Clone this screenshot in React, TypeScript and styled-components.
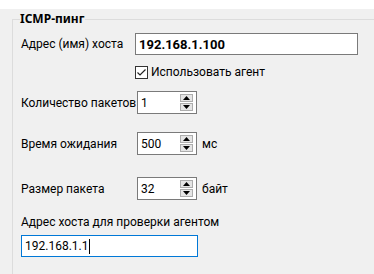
import React from 'react'
import styled, { createGlobalStyle } from 'styled-components'

const GlobalStyle = createGlobalStyle`
  html, body {
    margin: 0;
    padding: 0;
    background: #f0f0f0;
  }
  body {
    font-family: Roboto, "Noto Sans", "DejaVu Sans", sans-serif;
    font-size: 12px;
    color: #000;
  }
`

const TopStrip = styled.div`
  height: 9px;
  background: #fff;
`

const Panel = styled.div`
  background: #f0f0f0;
  height: 265px;
  padding: 2px 0 0 12px;
  box-sizing: border-box;
  overflow: hidden;
`

const Group = styled.fieldset`
  margin: 0;
  padding: 0 0 20px 8px;
  border: 1px solid #dcdcdc;
  border-right: none;
  border-bottom: none;
  min-width: 0;
`

const Legend = styled.legend`
  padding: 0 1px 0 0;
  margin-left: -1px;
  font-family: "Noto Sans", sans-serif;
  font-weight: bold;
  font-size: 12px;
  line-height: 16px;
`

const Row = styled.div<{ $top: number }>`
  display: flex;
  align-items: center;
  margin-top: ${({ $top }) => $top}px;
`

const Label = styled.span<{ $width?: number }>`
  width: ${({ $width }) => ($width ? `${$width}px` : 'auto')};
  flex: none;
  white-space: nowrap;
  line-height: 16px;
`

const TextBox = styled.div<{ $width: number; $bold?: boolean; $focused?: boolean }>`
  box-sizing: border-box;
  width: ${({ $width }) => $width}px;
  height: 22px;
  padding: 0 3px;
  display: flex;
  align-items: center;
  border: 1px solid ${({ $focused }) => ($focused ? '#0078d7' : '#7a7a7a')};
  background: #fff;
  font-size: ${({ $bold }) => ($bold ? '13px' : '12px')};
  font-weight: ${({ $bold }) => ($bold ? 'bold' : 'normal')};
  white-space: nowrap;
`

const Caret = styled.span`
  display: inline-block;
  width: 1px;
  height: 15px;
  margin-left: 1px;
  background: #000;
`

const CheckRow = styled.label`
  display: flex;
  align-items: center;
  gap: 3px;
  margin: 9px 0 0 114px;
  line-height: 16px;
`

const CheckBox = styled.span`
  box-sizing: border-box;
  width: 13px;
  height: 13px;
  border: 1px solid #333;
  background: #fff;
  display: flex;
  align-items: center;
  justify-content: center;
`

const Spin = styled.div`
  box-sizing: border-box;
  width: 60px;
  height: 23px;
  border: 1px solid #7a7a7a;
  background: #fff;
  display: flex;
  align-items: center;
  padding: 0 3px 0 3px;
`

const SpinValue = styled.span`
  flex: 1;
  line-height: 16px;
`

const SpinButtons = styled.div`
  display: flex;
  flex-direction: column;
  gap: 1px;
`

const SpinButton = styled.div`
  box-sizing: border-box;
  width: 13px;
  height: 8px;
  background: #e5e5e5;
  border: 1px solid #adadad;
  display: flex;
  align-items: center;
  justify-content: center;
`

const Unit = styled.span`
  margin-left: 5px;
  line-height: 16px;
`

const Stack = styled.div`
  margin-top: 14px;
  display: flex;
  flex-direction: column;
  gap: 5px;
`

const Arrow = ({ up }: { up?: boolean }) => (
  <svg width="7" height="4" viewBox="0 0 7 4">
    <path d={up ? 'M0 4 L3.5 0 L7 4 Z' : 'M0 0 L3.5 4 L7 0 Z'} fill="#000" />
  </svg>
)

const SpinBox = ({ value }: { value: string }) => (
  <Spin>
    <SpinValue>{value}</SpinValue>
    <SpinButtons>
      <SpinButton>
        <Arrow up />
      </SpinButton>
      <SpinButton>
        <Arrow />
      </SpinButton>
    </SpinButtons>
  </Spin>
)

export default function App() {
  return (
    <>
      <GlobalStyle />
      <TopStrip />
      <Panel>
        <Group>
          <Legend>ICMP-пинг</Legend>
          <Row $top={6}>
            <Label $width={114}>Адрес (имя) хоста</Label>
            <TextBox $width={223} $bold>
              192.168.1.100
            </TextBox>
          </Row>
          <CheckRow>
            <CheckBox>
              <svg width="11" height="11" viewBox="0 0 11 11">
                <path d="M1.5 5.5 L4 8 L9.5 2.5" stroke="#222" strokeWidth="1.2" fill="none" />
              </svg>
            </CheckBox>
            Использовать агент
          </CheckRow>
          <Row $top={11}>
            <Label $width={116}>Количество пакетов</Label>
            <SpinBox value="1" />
          </Row>
          <Row $top={18}>
            <Label $width={116}>Время ожидания</Label>
            <SpinBox value="500" />
            <Unit>мс</Unit>
          </Row>
          <Row $top={22}>
            <Label $width={116}>Размер пакета</Label>
            <SpinBox value="32" />
            <Unit>байт</Unit>
          </Row>
          <Stack>
            <Label>Адрес хоста для проверки агентом</Label>
            <TextBox $width={177} $focused>
              192.168.1.1
              <Caret />
            </TextBox>
          </Stack>
        </Group>
      </Panel>
    </>
  )
}
